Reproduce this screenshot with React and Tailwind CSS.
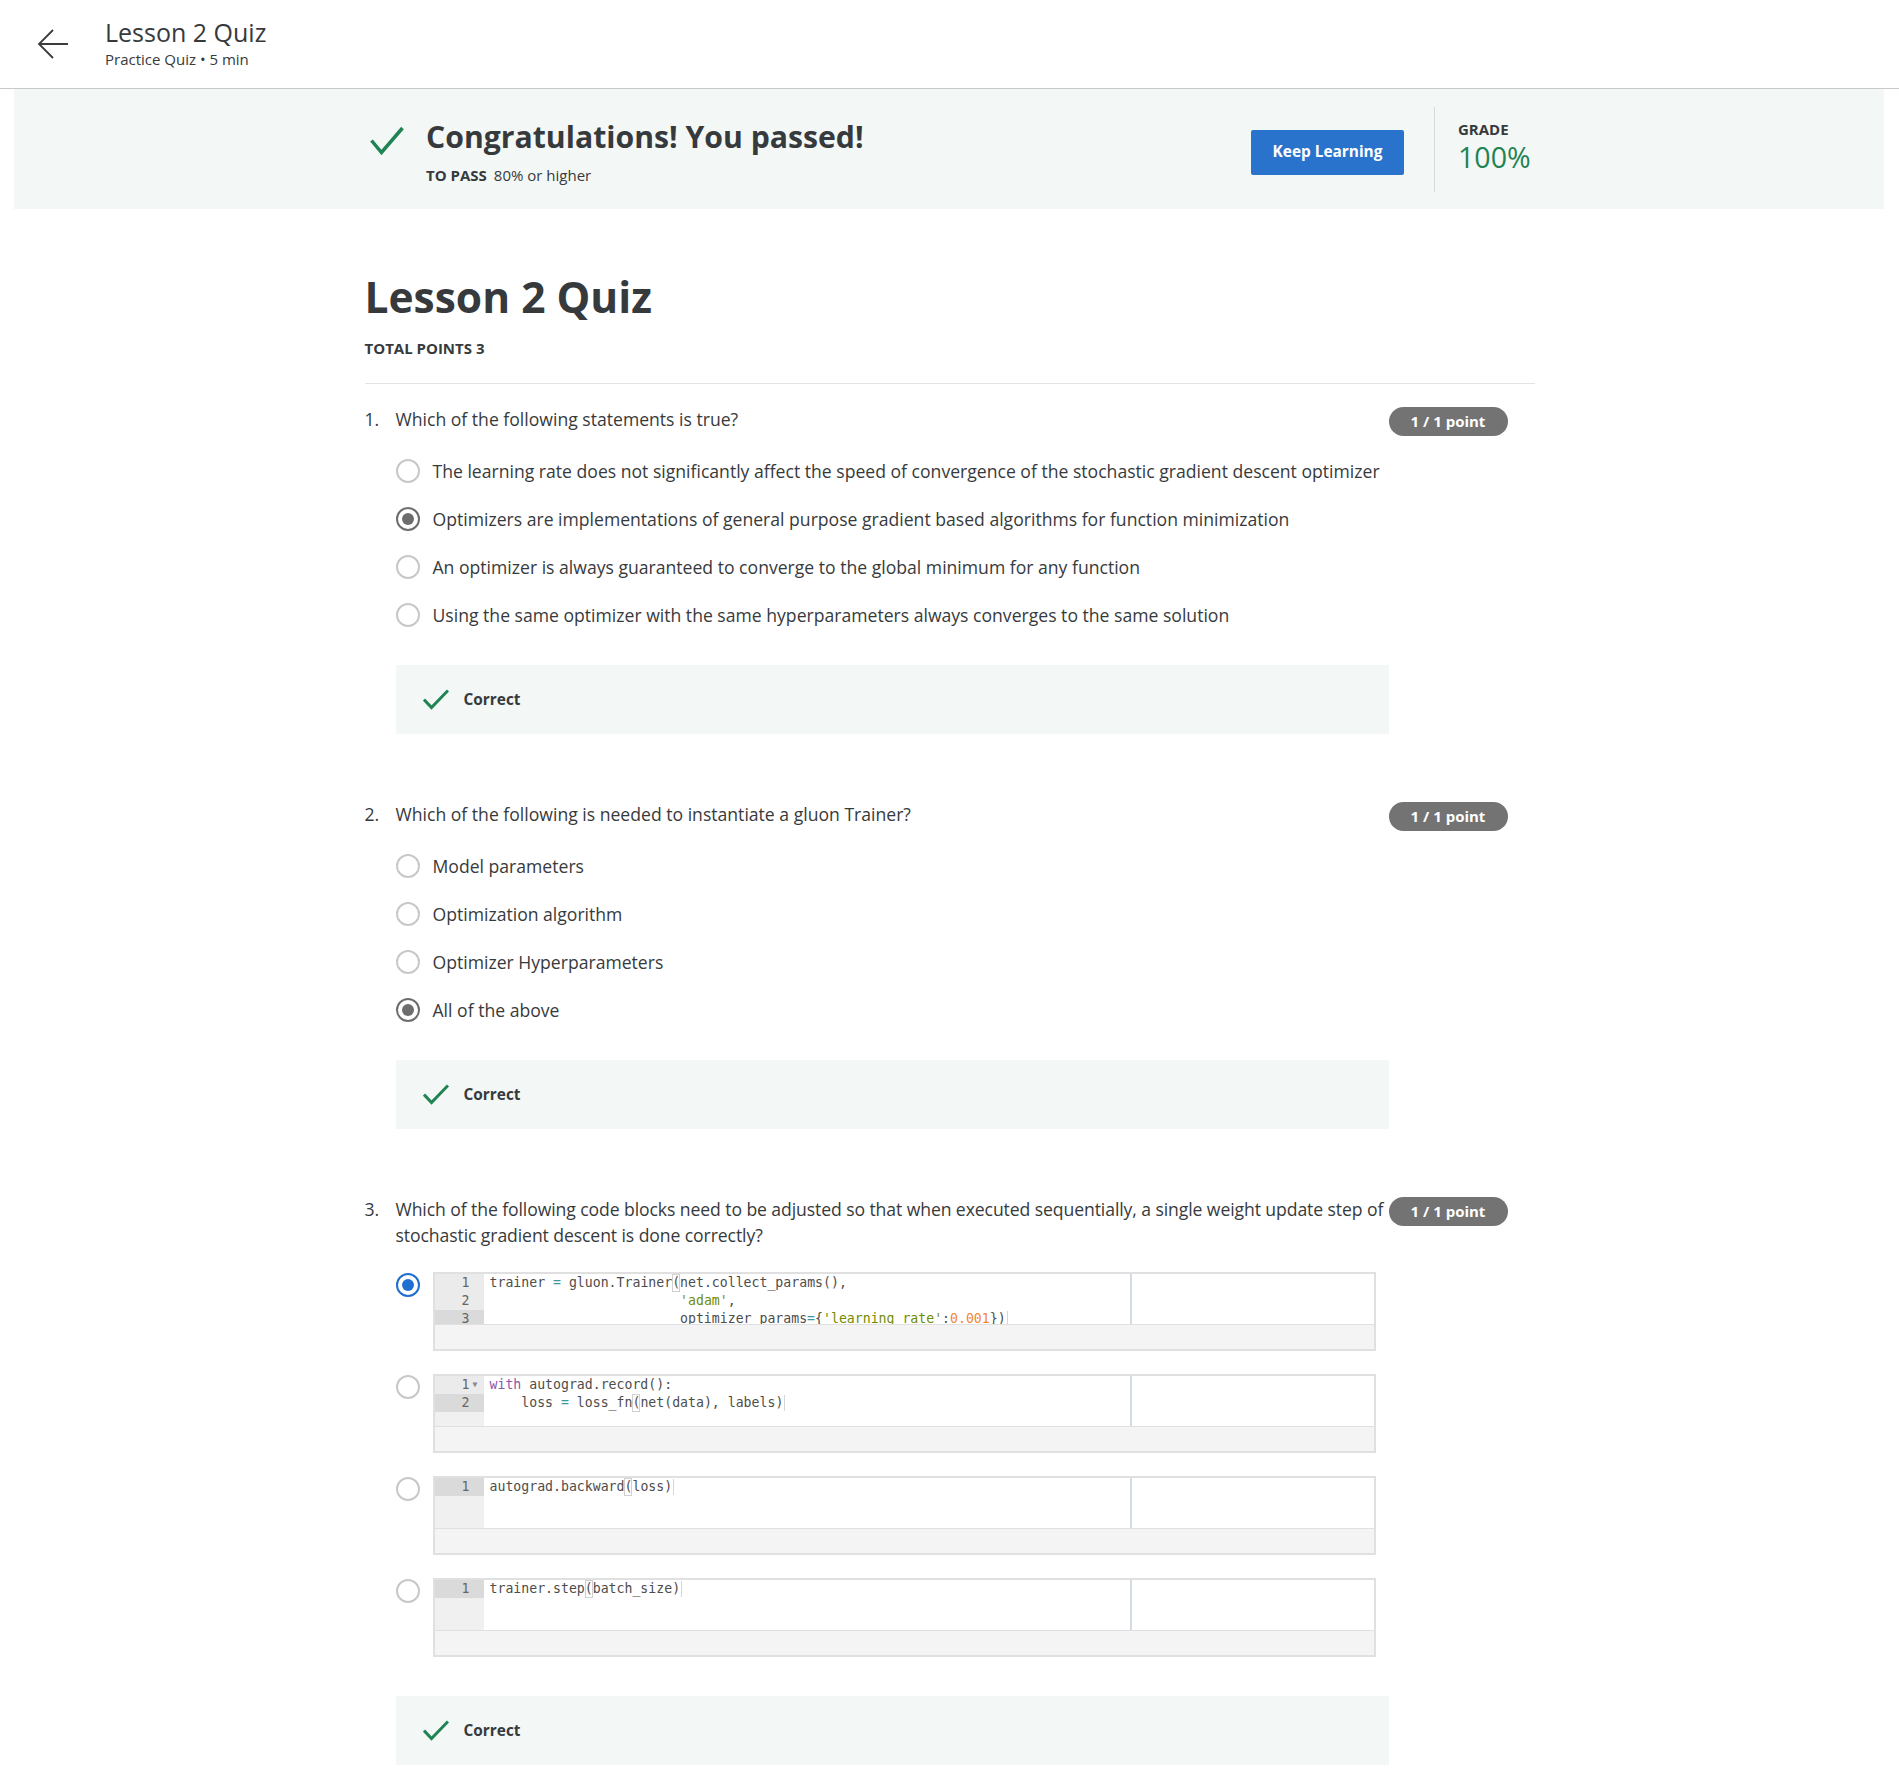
import React from "react";

const D = "text-[#4d4d4c]";
const T = "text-[#3e999f]";
const G = "text-[#718c00]";
const O = "text-[#f5871f]";
const P = "text-[#8959a8]";

const questions = [
  {
    num: "1.",
    text: "Which of the following statements is true?",
    options: [
      "The learning rate does not significantly affect the speed of convergence of the stochastic gradient descent optimizer",
      "Optimizers are implementations of general purpose gradient based algorithms for function minimization",
      "An optimizer is always guaranteed to converge to the global minimum for any function",
      "Using the same optimizer with the same hyperparameters always converges to the same solution",
    ],
    selected: 1,
  },
  {
    num: "2.",
    text: "Which of the following is needed to instantiate a gluon Trainer?",
    options: [
      "Model parameters",
      "Optimization algorithm",
      "Optimizer Hyperparameters",
      "All of the above",
    ],
    selected: 3,
  },
];

const pad = " ".repeat(24);

const codeBlocks = [
  {
    active: 2,
    lines: [
      [["trainer ", D], ["=", T], [" gluon.Trainer", D], ["(", D, "br"], ["net.collect_params(),", D]],
      [[pad, D], ["'adam'", G], [",", D]],
      [[pad + "optimizer_params", D], ["=", T], ["{", D], ["'learning_rate'", G], [":", D], ["0.001", O], ["})", D], ["", D, "cur"]],
    ],
  },
  {
    active: 1,
    fold: true,
    lines: [
      [["with", P], [" autograd.record():", D]],
      [["    loss ", D], ["=", T], [" loss_fn", D], ["(", D, "br"], ["net(data), labels)", D], ["", D, "cur"]],
    ],
  },
  {
    active: 0,
    lines: [[["autograd.backward", D], ["(", D, "br"], ["loss)", D], ["", D, "cur"]]],
  },
  {
    active: 0,
    lines: [[["trainer.step", D], ["(", D, "br"], ["batch_size)", D], ["", D, "cur"]]],
  },
];

function Check({ w = 34, h = 29, sw = 3.5 }) {
  return (
    <svg width={w} height={h} viewBox="0 0 34 29" fill="none">
      <path d="M1.5 14.5 L11.5 26.5 L32.5 2" stroke="#1f8354" strokeWidth={sw} />
    </svg>
  );
}

function Radio({ state }) {
  if (state === "gray") {
    return (
      <span className="w-6 h-6 shrink-0 rounded-full border-2 border-[#6d6d6d] bg-white flex items-center justify-center">
        <span className="w-3 h-3 rounded-full bg-[#6d6d6d]" />
      </span>
    );
  }
  if (state === "blue") {
    return (
      <span className="w-6 h-6 shrink-0 rounded-full border-2 border-[#1f6fd0] bg-white flex items-center justify-center">
        <span className="w-3 h-3 rounded-full bg-[#1f6fd0]" />
      </span>
    );
  }
  return <span className="block w-6 h-6 shrink-0 rounded-full border-2 border-[#c8c8c8] bg-white" />;
}

function Badge() {
  return (
    <div className="mt-px w-[119px] h-[29px] shrink-0 rounded-full bg-[#737373] text-white font-bold text-[15px] flex items-center justify-center">
      1 / 1 point
    </div>
  );
}

function Correct() {
  return (
    <div className="h-[69px] w-full bg-[#f3f8f6] flex items-center pl-[27px] gap-[15px]">
      <svg width="26" height="21" viewBox="0 0 26 21" fill="none">
        <path d="M1 10.5 L8.5 18.5 L25 1.5" stroke="#1f8354" strokeWidth="3" />
      </svg>
      <span className="font-bold text-[15.4px] text-[#373a3c]">Correct</span>
    </div>
  );
}

function CodeBox({ block }) {
  return (
    <div className="w-[943px] border-2 border-[#e0e0e0] bg-white">
      <div className="flex h-[51px] overflow-hidden border-b border-[#e0e0e0]">
        <div className="w-[695px] flex">
          <div className="w-[49px] h-full bg-[#f0f0f0] shrink-0">
            {block.lines.map((_, i) => (
              <div
                key={i}
                className={`h-[18px] flex items-center text-[13.2px] text-[#666] font-['DejaVu_Sans_Mono',monospace] ${
                  i === block.active ? "bg-[#dadada]" : "bg-[#ebebeb]"
                }`}
              >
                <span className="w-[35px] text-right">{i + 1}</span>
                <span className="w-[14px] text-[8px] text-[#888] pl-[3px]">
                  {block.fold && i === 0 ? "▼" : ""}
                </span>
              </div>
            ))}
          </div>
          <div className="pl-[6px] font-['DejaVu_Sans_Mono',monospace] text-[13.2px] leading-[18px] whitespace-pre">
            {block.lines.map((line, i) => (
              <div key={i} className="h-[18px] flex items-center">
                {line.map(([t, c, k], j) =>
                  k === "cur" ? (
                    <span key={j} className="inline-block w-px h-[16px] bg-[#d6d6d6] ml-px" />
                  ) : k === "br" ? (
                    <span key={j} className={`${c} outline outline-[#d0d0d0] -outline-offset-1`}>
                      {t}
                    </span>
                  ) : (
                    <span key={j} className={c}>
                      {t}
                    </span>
                  )
                )}
              </div>
            ))}
          </div>
        </div>
        <div className="w-[2px] bg-[#d3dbe4]" />
        <div className="flex-1 bg-white" />
      </div>
      <div className="h-[24px] bg-[#f4f4f4]" />
    </div>
  );
}

export default function App() {
  return (
    <div className="min-h-screen bg-white font-['Open_Sans',sans-serif] text-[#373a3c]">
      {/* top bar */}
      <header className="h-[89px] border-b border-[#c9c9c9] flex items-center">
        <div className="pl-[37px] pr-[36px]">
          <svg width="32" height="32" viewBox="0 0 32 32" fill="none">
            <path d="M31 16 H2 M16 2 L2 16 L16 30" stroke="#3c3c3c" strokeWidth="1.8" />
          </svg>
        </div>
        <div className="-mt-[3px]">
          <div className="text-[25px] leading-[32px]">Lesson 2 Quiz</div>
          <div className="text-[15px] leading-[20px] mt-px">Practice Quiz • 5 min</div>
        </div>
      </header>

      {/* result banner */}
      <div className="ml-[14px] mr-[15px] h-[120px] bg-[#f3f8f6]">
        <div className="w-[1170px] mx-auto h-full flex items-center">
          <div className="flex-1 flex gap-[22px] pl-[6px] mt-[4px]">
            <div className="mt-[9px]">
              <Check />
            </div>
            <div>
              <div className="text-[30.2px] leading-[40px] font-bold">Congratulations! You passed!</div>
              <div className="mt-[8px] text-[15px] leading-[20px]">
                <span className="font-bold">TO PASS</span>
                <span className="ml-[7px]">80% or higher</span>
              </div>
            </div>
          </div>
          <button className="w-[153px] h-[45px] mt-[6px] rounded-[2px] bg-[#2a73cc] text-white font-bold text-[15.4px]">
            Keep Learning
          </button>
          <div className="ml-[30px] w-px h-[85px] bg-[#dadada]" />
          <div className="ml-[23px] w-[76px] -mt-[4px]">
            <div className="text-[15px] leading-[20px] font-bold">GRADE</div>
            <div className="text-[28.6px] leading-[36px] text-[#1f8354]">100%</div>
          </div>
        </div>
      </div>

      {/* quiz body */}
      <main className="w-[1170px] mx-auto pb-[13px]">
        <h1 className="mt-[62px] text-[42.5px] leading-[52px] font-bold">Lesson 2 Quiz</h1>
        <div className="mt-[15px] text-[15px] leading-[20px] font-bold">TOTAL POINTS 3</div>
        <div className="mt-[25px] h-px bg-[#e3e3e3]" />

        {questions.map((q, qi) => (
          <div key={qi} className={`flex ${qi === 0 ? "pt-[22px]" : "mt-[67px]"}`}>
            <div className="w-[31px] shrink-0 text-[17.6px] leading-[26px]">{q.num}</div>
            <div className="w-[993px] shrink-0">
              <div className="text-[17.6px] leading-[26px]">{q.text}</div>
              <div className="mt-[26px] flex flex-col gap-[22px]">
                {q.options.map((o, oi) => (
                  <div key={oi} className="flex items-center gap-[13px] h-[26px]">
                    <Radio state={oi === q.selected ? "gray" : "none"} />
                    <span className="text-[17.6px] leading-[26px]">{o}</span>
                  </div>
                ))}
              </div>
              <div className="mt-[37px]">
                <Correct />
              </div>
            </div>
            <Badge />
          </div>
        ))}

        <div className="flex mt-[67px]">
          <div className="w-[31px] shrink-0 text-[17.6px] leading-[26px]">3.</div>
          <div className="w-[993px] shrink-0">
            <div className="text-[17.6px] leading-[26px] whitespace-nowrap tracking-[-0.09px]">
              Which of the following code blocks need to be adjusted so that when executed sequentially, a single weight update step of
              <br />
              stochastic gradient descent is done correctly?
            </div>
            <div className="mt-[24px] flex flex-col gap-[23px]">
              {codeBlocks.map((b, bi) => (
                <div key={bi} className="flex items-start gap-[13px]">
                  <div className="mt-px shrink-0">
                    <Radio state={bi === 0 ? "blue" : "none"} />
                  </div>
                  <CodeBox block={b} />
                </div>
              ))}
            </div>
            <div className="mt-[39px]">
              <Correct />
            </div>
          </div>
          <Badge />
        </div>
      </main>
    </div>
  );
}
